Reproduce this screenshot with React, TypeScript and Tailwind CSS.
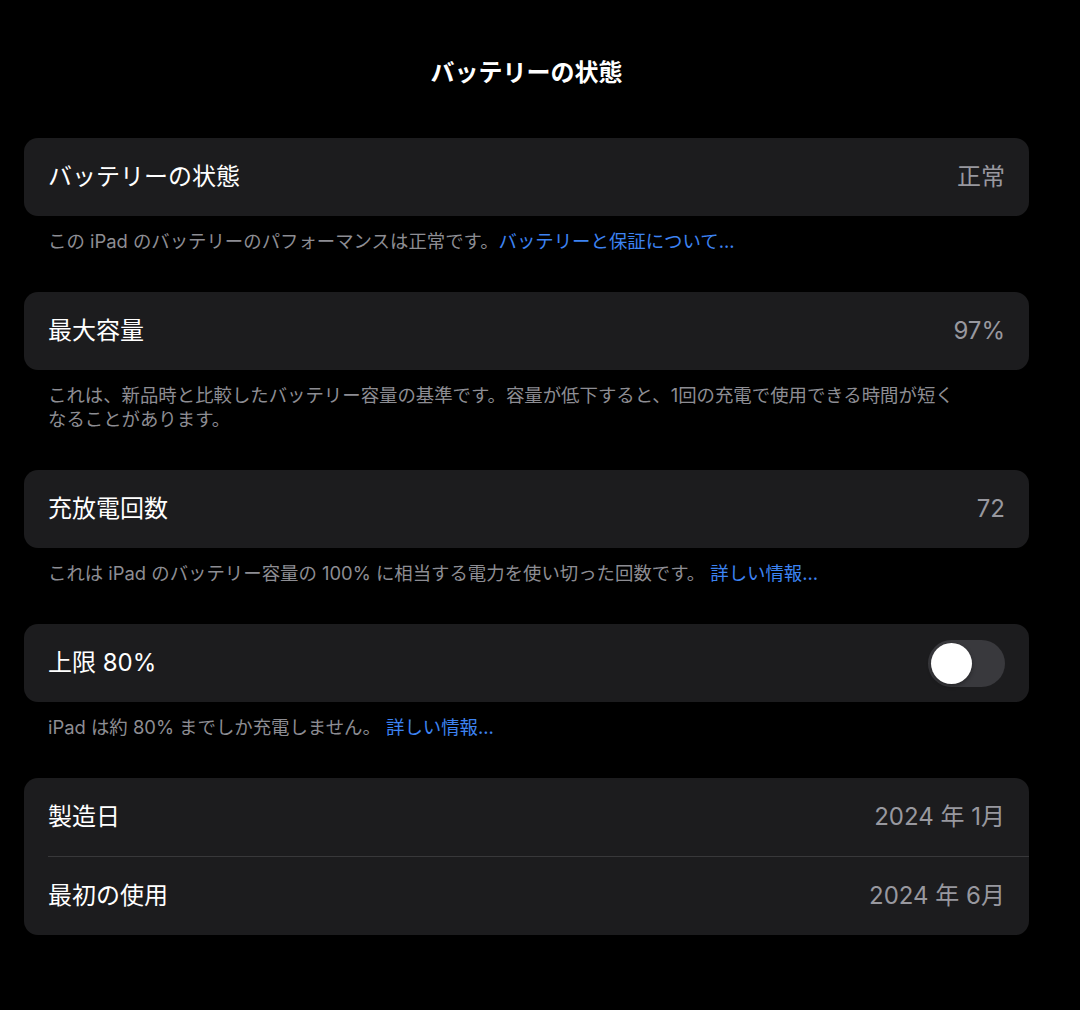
import React from "react";

const font = {
  fontFamily: '"Inter", "Noto Sans CJK JP", sans-serif',
};

function Row({ label, value, children }: { label: string; value?: string; children?: React.ReactNode }) {
  return (
    <div className="h-[78px] flex items-center justify-between pl-6 pr-6">
      <div className="text-[24px] text-white">{label}</div>
      {value && <div className="text-[24px] text-[#98989f]">{value}</div>}
      {children}
    </div>
  );
}

function Footer({ children }: { children: React.ReactNode }) {
  return (
    <div className="pt-[13px] pl-6 pr-6 text-[18.4px] leading-[24px] text-[#8d8d93] mb-[39px]">
      {children}
    </div>
  );
}

function Link({ children }: { children: React.ReactNode }) {
  return <span className="text-[#3d83f2]">{children}</span>;
}

function Toggle() {
  return (
    <div className="w-[77px] h-[47px] rounded-full bg-[#39393d] p-[3px] flex items-center">
      <div className="w-[41px] h-[41px] rounded-full bg-white shadow-[0_2px_4px_rgba(0,0,0,0.35)]" />
    </div>
  );
}

export default function App() {
  return (
    <div className="w-full min-h-[1010px] bg-black" style={font}>
      <div className="w-[1005px] ml-6 pt-[58px]">
        <div className="h-[30px] leading-[30px] text-center text-[24px] font-bold text-white mb-[50px]">
          バッテリーの状態
        </div>

        <div className="bg-[#1c1c1e] rounded-[14px]">
          <Row label="バッテリーの状態" value="正常" />
        </div>
        <Footer>
          この iPad のバッテリーのパフォーマンスは正常です。<Link>バッテリーと保証について...</Link>
        </Footer>

        <div className="bg-[#1c1c1e] rounded-[14px]">
          <Row label="最大容量" value="97%" />
        </div>
        <Footer>
          これは、新品時と比較したバッテリー容量の基準です。容量が低下すると、1回の充電で使用できる時間が短く
          <br />
          なることがあります。
        </Footer>

        <div className="bg-[#1c1c1e] rounded-[14px]">
          <Row label="充放電回数" value="72" />
        </div>
        <Footer>
          これは iPad のバッテリー容量の 100% に相当する電力を使い切った回数です。 <Link>詳しい情報...</Link>
        </Footer>

        <div className="bg-[#1c1c1e] rounded-[14px]">
          <Row label="上限 80%">
            <Toggle />
          </Row>
        </div>
        <Footer>
          iPad は約 80% までしか充電しません。 <Link>詳しい情報...</Link>
        </Footer>

        <div className="bg-[#1c1c1e] rounded-[14px] flex flex-col">
          <Row label="製造日" value="2024 年 1月" />
          <div className="ml-6 h-px bg-[#38383a]" />
          <Row label="最初の使用" value="2024 年 6月" />
        </div>
      </div>
    </div>
  );
}
